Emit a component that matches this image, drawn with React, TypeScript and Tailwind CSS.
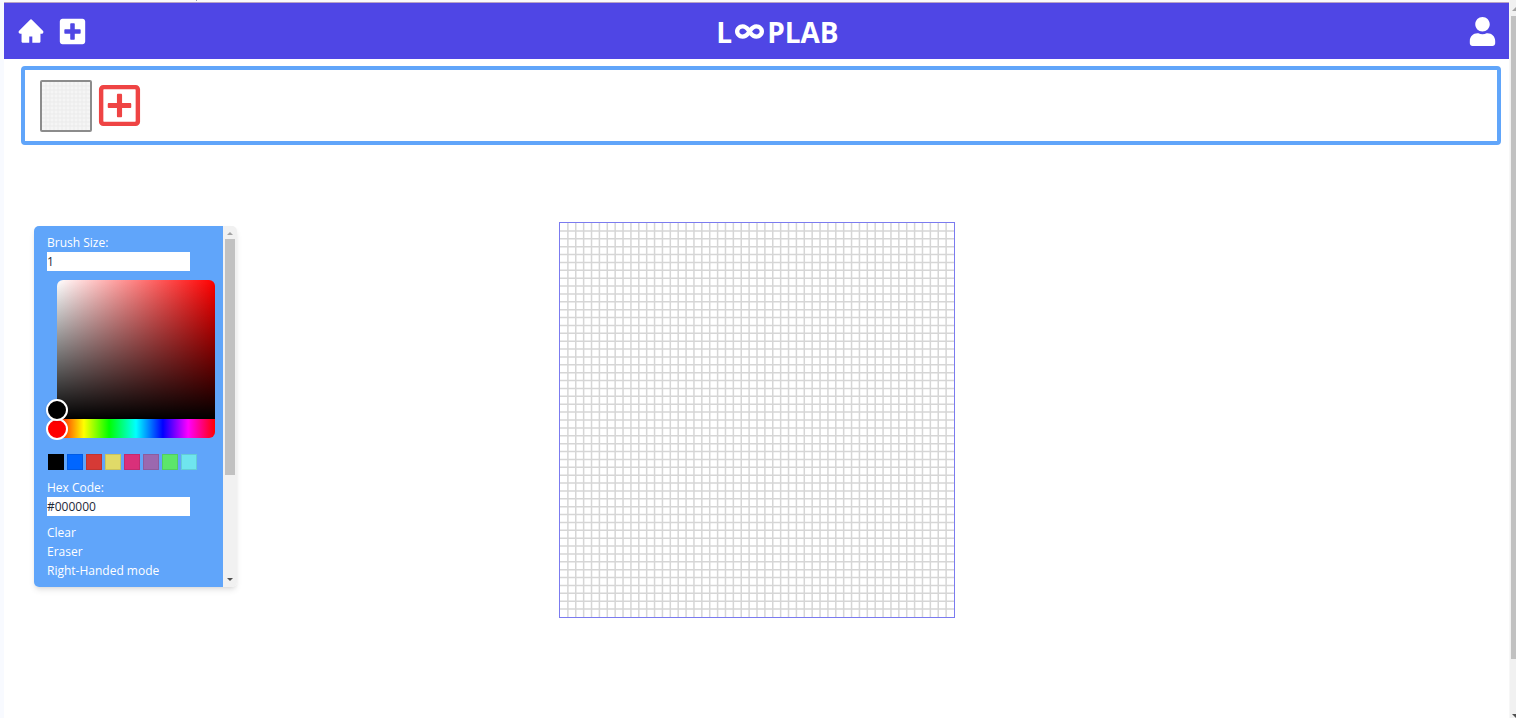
import { useState } from "react";
import { AiFillHome } from "react-icons/ai";
import { FaInfinity, FaPlusSquare, FaRegPlusSquare, FaUser } from "react-icons/fa";

const SWATCHES = [
  { name: "Black", hex: "#000000" },
  { name: "Blue", hex: "#0066ff" },
  { name: "Red", hex: "#d63a36" },
  { name: "Yellow", hex: "#e0da68" },
  { name: "Pink", hex: "#d9307a" },
  { name: "Purple", hex: "#9b68af" },
  { name: "Green", hex: "#5ce66b" },
  { name: "Cyan", hex: "#6fe5ee" },
];

function Header() {
  return (
    <header className="flex h-14 items-center justify-between bg-[#4f46e5] px-3 text-white">
      <nav className="flex items-center gap-3">
        <a href="#home" aria-label="Home" className="px-px">
          <AiFillHome className="size-7" />
        </a>
        <a href="#new" aria-label="New project">
          <FaPlusSquare className="size-[29px]" />
        </a>
      </nav>
      <h1 className="flex items-center pt-[2px] text-[28px] leading-8 font-bold">
        L
        <FaInfinity role="img" aria-label="oo" className="mx-[3px] mb-[2px] size-[29px]" />
        PLAB
      </h1>
      <a href="#account" aria-label="Account">
        <FaUser className="size-[29px]" />
      </a>
    </header>
  );
}

function Frames() {
  return (
    <section
      aria-label="Frames"
      className="mt-[7px] mr-2 ml-[17px] flex h-[79px] items-center gap-1 rounded border-4 border-[#60a5fa] px-[15px]"
    >
      <button aria-label="Frame 1" className="size-[52px] rounded-xs border-2 border-[#8c8c8c] bg-[#f5f5f5]">
        <svg className="size-full" viewBox="0 0 48 48">
          <path
            d="M4 0V48M8 0V48M12 0V48M16 0V48M20 0V48M24 0V48M28 0V48M32 0V48M36 0V48M40 0V48M44 0V48M0 4H48M0 8H48M0 12H48M0 16H48M0 20H48M0 24H48M0 28H48M0 32H48M0 36H48M0 40H48M0 44H48"
            stroke="#ebebeb"
            strokeWidth="1"
          />
        </svg>
      </button>
      <button aria-label="Add frame" className="text-[#ef4444]">
        <FaRegPlusSquare className="size-[47px]" />
      </button>
    </section>
  );
}

function ColorPicker() {
  const [hue, setHue] = useState(0);
  return (
    <div className="mt-[9px] ml-[10px] w-[158px]">
      <div className="relative h-[139px] rounded-t-md bg-[linear-gradient(to_top,#000,transparent),linear-gradient(to_right,#fff,#f00)]">
        <div className="absolute bottom-[-2px] left-[-11px] z-10 size-[22px] rounded-full border-2 border-white bg-black shadow" />
      </div>
      <div className="relative h-[19px] rounded-b-md bg-[linear-gradient(to_right,#f00_0%,#ff0_17%,#0f0_33%,#0ff_50%,#00f_67%,#f0f_83%,#f00_100%)]">
        <input
          type="range"
          aria-label="Hue"
          min={0}
          max={360}
          value={hue}
          onChange={(e) => setHue(Number(e.target.value))}
          className="absolute top-[-1px] left-[-11px] h-[22px] w-[180px] appearance-none bg-transparent [&::-webkit-slider-thumb]:size-[22px] [&::-webkit-slider-thumb]:appearance-none [&::-webkit-slider-thumb]:rounded-full [&::-webkit-slider-thumb]:border-2 [&::-webkit-slider-thumb]:border-solid [&::-webkit-slider-thumb]:border-white [&::-webkit-slider-thumb]:bg-[#f00]"
        />
      </div>
    </div>
  );
}

function Tools() {
  const [size, setSize] = useState("1");
  const [hex, setHex] = useState("#000000");
  return (
    <aside className="mt-1 ml-[30px] flex h-[361px] w-[203px] overflow-hidden rounded-[5px] shadow-md">
      <div className="flex-1 bg-[#60a5fa] pt-[7px] pl-[13px] text-[12px] leading-[19px] text-white">
        <label htmlFor="brush" className="block">
          Brush Size:
        </label>
        <input
          id="brush"
          value={size}
          onChange={(e) => setSize(e.target.value)}
          className="block h-[19px] w-[143px] bg-white text-gray-800"
        />
        <ColorPicker />
        <div className="mt-4 ml-px flex gap-[3px]">
          {SWATCHES.map((s) => (
            <button
              key={s.hex}
              aria-label={s.name}
              onClick={() => setHex(s.hex)}
              className="size-4 border border-black/10"
              style={{ backgroundColor: s.hex }}
            />
          ))}
        </div>
        <label htmlFor="hex" className="mt-2 block">
          Hex Code:
        </label>
        <input
          id="hex"
          value={hex}
          onChange={(e) => setHex(e.target.value)}
          className="block h-[19px] w-[143px] bg-white text-gray-800"
        />
        <div className="mt-[7px] flex flex-col items-start">
          <button onClick={() => setHex("#000000")}>Clear</button>
          <button>Eraser</button>
          <button>Right-Handed mode</button>
        </div>
      </div>
      <div aria-hidden="true" className="flex w-[14px] flex-col items-center bg-[#f1f1f1]">
        <svg className="h-[13px] w-[6px]" viewBox="0 0 6 13">
          <path d="M0 9L3 6L6 9Z" fill="#a3a3a3" />
        </svg>
        <div className="h-[236px] w-[10px] bg-[#c1c1c1]" />
        <svg className="mt-auto h-[13px] w-[6px]" viewBox="0 0 6 13">
          <path d="M0 4L3 7L6 4Z" fill="#505050" />
        </svg>
      </div>
    </aside>
  );
}

function Canvas() {
  const lines = Array.from({ length: 49 }, (_, i) => (i + 1) * 7.9);
  return (
    <svg
      role="img"
      aria-label="Drawing canvas"
      className="size-[396px] border border-[#7b7bf0]"
      viewBox="0 0 395 395"
    >
      <path d={lines.map((p) => `M${p} 0V395M0 ${p}H395`).join("")} stroke="#d6d6d6" strokeWidth="1.5" />
    </svg>
  );
}

export default function App() {
  return (
    <div className="flex min-h-screen bg-white font-['Open_Sans','Noto_Sans',sans-serif]">
      <div className="w-1 bg-[#f8faff]" />
      <div className="min-w-0 flex-1">
        <div className="h-[3px] border-b border-[#b9a3c4] bg-[#fafafa]">
          <div className="ml-48 h-px w-px bg-gray-400" />
        </div>
        <Header />
        <Frames />
        <main className="mt-[77px] grid grid-cols-[1fr_auto_1fr] items-start">
          <Tools />
          <Canvas />
        </main>
      </div>
      <div aria-hidden="true" className="flex w-[7px] flex-col overflow-hidden border-l border-[#f7f7f7] bg-[#f1f1f1] pt-1">
        <svg className="ml-[2px] h-3 w-2 shrink-0" viewBox="0 0 8 12">
          <path d="M0 7L4 3L8 7Z" fill="#a3a3a3" />
        </svg>
        <div className="ml-px h-[643px] bg-[#c1c1c1]" />
        <svg className="mt-auto ml-[2px] h-2 w-2 shrink-0" viewBox="0 0 8 8">
          <path d="M0 4L4 8L8 4Z" fill="#505050" />
        </svg>
      </div>
    </div>
  );
}
